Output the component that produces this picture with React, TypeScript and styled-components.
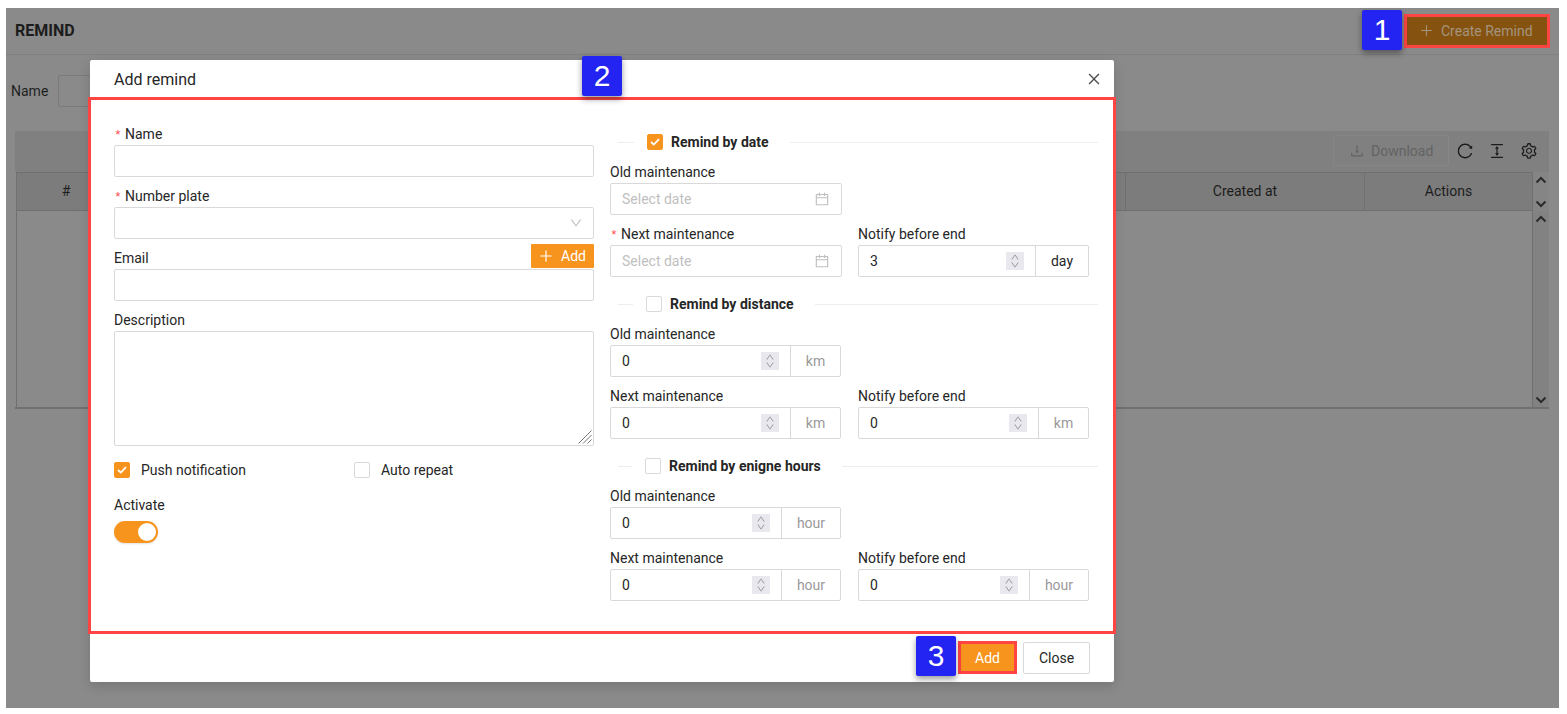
import React from 'react';
import styled, { createGlobalStyle } from 'styled-components';
import {
  AiOutlineCalendar,
  AiOutlineClose,
  AiOutlineColumnHeight,
  AiOutlineDown,
  AiOutlineDownload,
  AiOutlinePlus,
  AiOutlineReload,
  AiOutlineSetting,
  AiOutlineUp,
} from 'react-icons/ai';

const ORANGE = '#f7941d';
const RED = '#ff4444';

const GlobalStyle = createGlobalStyle`
  html, body {
    margin: 0;
    padding: 0;
    background: #fff;
  }
  * {
    box-sizing: border-box;
  }
  body {
    font-family: Roboto, "Liberation Sans", sans-serif;
    font-size: 14px;
    color: #262626;
  }
`;

const Page = styled.div`
  width: 1567px;
  height: 714px;
  padding: 8px 8px 6px 6px;
  overflow: hidden;
`;

const Screen = styled.div`
  position: relative;
  height: 100%;
  background: #8a8a8a;
`;

const Header = styled.header`
  display: flex;
  align-items: center;
  justify-content: space-between;
  height: 47px;
  padding: 0 9px 1px;
  border-bottom: 1px solid #808080;
`;

const PageTitle = styled.h1`
  margin: 0;
  font-size: 16px;
  font-weight: 700;
  color: #1c1c1c;
`;

const CreateButton = styled.div`
  display: flex;
  align-items: center;
  gap: 7px;
  width: 146px;
  height: 34px;
  padding-left: 12px;
  border: 3px solid ${RED};
  background: #85520f;
  color: #a3947f;
`;

const FilterRow = styled.div`
  display: flex;
  align-items: center;
  gap: 10px;
  margin-top: 20px;
  padding-left: 5px;
  color: #1f1f1f;
`;

const FilterInput = styled.div`
  width: 220px;
  height: 32px;
  border: 1px solid #7a7a7a;
  border-radius: 2px;
`;

const TableSection = styled.section`
  margin: 24px 10px 0 9px;
`;

const TableToolbar = styled.div`
  display: flex;
  align-items: center;
  justify-content: flex-end;
  height: 41px;
  padding: 0 4px 2px 0;
  background: #808080;
`;

const DownloadButton = styled.div`
  display: flex;
  align-items: center;
  gap: 6px;
  width: 116px;
  height: 31px;
  padding-left: 15px;
  border: 1px solid #868686;
  border-radius: 2px;
  color: #636363;
`;

const ToolIcon = styled.div`
  display: flex;
  align-items: center;
  justify-content: center;
  width: 32px;
  color: #1c1c1c;
`;

const TableFrame = styled.div`
  display: flex;
  height: 237px;
  padding-left: 1px;
  border-bottom: 2px solid #707070;
`;

const TableMain = styled.div`
  flex: 1;
  border-left: 1px solid #707070;
  border-right: 1px solid #707070;
`;

const HeaderRow = styled.div`
  display: grid;
  grid-template-columns: 99px 1fr 239px 167px;
  height: 39px;
  background: #7c7c7c;
  border-top: 1px solid #707070;
  border-bottom: 1px solid #6f6f6f;
`;

const HeaderCell = styled.div`
  display: flex;
  align-items: center;
  justify-content: center;
  padding-bottom: 1px;
  border-right: 1px solid #6f6f6f;
  color: #1c1c1c;

  &:last-child {
    border-right: none;
  }
`;

const ScrollColumn = styled.div`
  display: flex;
  flex-direction: column;
  width: 16px;
`;

const ScrollTrack = styled.div<{ $height: number; $shade: string }>`
  display: flex;
  flex-direction: column;
  align-items: center;
  justify-content: space-between;
  height: ${props => props.$height}px;
  padding: 4px 0 3px;
  background: ${props => props.$shade};
  color: #2b2b2b;
`;

const Modal = styled.div`
  position: absolute;
  left: 84px;
  top: 52px;
  width: 1024px;
  height: 622px;
  background: #fff;
  border-radius: 2px;
  box-shadow: 0 4px 12px rgba(0, 0, 0, 0.15);
`;

const ModalHeader = styled.div`
  display: flex;
  align-items: center;
  justify-content: space-between;
  height: 37px;
  padding: 1px 12px 0 24px;
  font-size: 16px;
  color: #262626;
`;

const CloseIcon = styled.span`
  display: flex;
  color: #4a4a4a;
`;

const ModalBody = styled.div`
  display: flex;
  gap: 16px;
  height: 537px;
  margin: 0 -2px 0 -2px;
  padding: 23px 0 0 23px;
  border: 3px solid ${RED};
`;

const LeftColumn = styled.div`
  width: 480px;
`;

const RightColumn = styled.div`
  width: 488px;
  padding-top: 7px;
`;

const FormItem = styled.div`
  margin-bottom: 8px;
`;

const LabelRow = styled.div`
  display: flex;
  align-items: flex-start;
  justify-content: space-between;
  height: 22px;
`;

const Label = styled.label`
  display: block;
  height: 22px;
  line-height: 22px;
  color: #262626;
`;

const Star = styled.span`
  display: inline-block;
  width: 7px;
  margin-right: 4px;
  color: #ff4d4f;
  font-family: "Liberation Mono", monospace;
  font-size: 13px;
`;

const TextInput = styled.input`
  display: block;
  width: 100%;
  height: 32px;
  padding: 0 11px;
  border: 1px solid #d9d9d9;
  border-radius: 2px;
  outline: none;
  font: inherit;
`;

const SelectBox = styled.div`
  display: flex;
  align-items: center;
  justify-content: flex-end;
  height: 32px;
  padding-right: 10px;
  border: 1px solid #d9d9d9;
  border-radius: 2px;
  color: #bfbfbf;
`;

const SmallAdd = styled.div`
  display: flex;
  align-items: center;
  gap: 7px;
  height: 24px;
  margin-top: -3px;
  padding: 0 8px 0 7px;
  background: ${ORANGE};
  color: #fff;
  border-radius: 1px;
`;

const TextAreaWrap = styled.div`
  position: relative;
  height: 115px;
`;

const TextArea = styled.textarea`
  display: block;
  width: 100%;
  height: 100%;
  margin: 0;
  border: 1px solid #d9d9d9;
  border-radius: 2px;
  outline: none;
  resize: none;
  font: inherit;
`;

const ResizeGrip = styled.svg`
  position: absolute;
  right: 2px;
  bottom: 2px;
`;

const CheckRow = styled.div`
  display: grid;
  grid-template-columns: 240px 1fr;
  margin-top: 13px;
`;

const CheckItem = styled.div`
  display: flex;
  align-items: center;
  gap: 11px;
  height: 22px;
`;

const Box = styled.span<{ $checked?: boolean }>`
  display: flex;
  align-items: center;
  justify-content: center;
  flex-shrink: 0;
  width: 16px;
  height: 16px;
  border: 1px solid ${props => (props.$checked ? ORANGE : '#d9d9d9')};
  border-radius: 2px;
  background: ${props => (props.$checked ? ORANGE : '#fff')};
`;

const ActivateLabel = styled(Label)`
  margin-top: 13px;
`;

const Switch = styled.div`
  display: flex;
  justify-content: flex-end;
  width: 44px;
  height: 22px;
  margin-top: 5px;
  padding: 2px;
  border-radius: 11px;
  background: ${ORANGE};
  box-shadow: 0 1px 2px rgba(0, 0, 0, 0.12);
`;

const Knob = styled.span`
  width: 18px;
  height: 18px;
  border-radius: 50%;
  background: #fff;
`;

const Section = styled.div`
  margin-bottom: 15px;
`;

const DividerRow = styled.div`
  display: flex;
  align-items: center;
  height: 24px;
  margin: 0 0 7px 8px;
`;

const DividerLine = styled.span<{ $width?: number }>`
  flex: ${props => (props.$width ? `0 0 ${props.$width}px` : '1')};
  height: 1px;
  background: #eeeeee;
`;

const DividerTitle = styled.div`
  display: flex;
  align-items: center;
  gap: 8px;
  padding: 0 21px 0 13px;
  font-weight: 700;
  color: #262626;
`;

const FieldGrid = styled.div`
  display: grid;
  grid-template-columns: 231px 231px;
  column-gap: 17px;
  row-gap: 8px;
`;

const Field = styled.div``;

const DateBox = styled.div`
  display: flex;
  align-items: center;
  justify-content: space-between;
  height: 32px;
  margin-right: -1px;
  padding: 0 11px;
  border: 1px solid #d9d9d9;
  border-radius: 2px;
  color: #bfbfbf;
`;

const NumberGroup = styled.div`
  display: flex;
  height: 32px;
  border: 1px solid #d9d9d9;
  border-radius: 2px;
`;

const NumberValue = styled.div`
  display: flex;
  flex: 1;
  align-items: center;
  justify-content: space-between;
  padding: 0 11px;
  color: #262626;
`;

const Stepper = styled.span`
  display: flex;
  flex-direction: column;
  align-items: center;
  justify-content: center;
  width: 18px;
  height: 18px;
  line-height: 0;
  background: #e8e8ee;
  color: #8c8c8c;

  svg + svg {
    margin-top: -2px;
  }
`;

const Addon = styled.div<{ $width: number; $muted?: boolean }>`
  display: flex;
  align-items: center;
  justify-content: center;
  width: ${props => props.$width}px;
  border-left: 1px solid #d9d9d9;
  color: ${props => (props.$muted ? '#999' : '#262626')};
`;

const ModalFooter = styled.div`
  display: flex;
  align-items: center;
  justify-content: flex-end;
  gap: 6px;
  height: 48px;
  padding-right: 24px;
`;

const AddButton = styled.div`
  display: flex;
  align-items: center;
  justify-content: center;
  width: 59px;
  height: 33px;
  margin-top: -1px;
  border: 3px solid ${RED};
  background: ${ORANGE};
  color: #fff;
`;

const CloseButton = styled.div`
  display: flex;
  align-items: center;
  justify-content: center;
  width: 67px;
  height: 32px;
  border: 1px solid #d9d9d9;
  border-radius: 2px;
  color: #262626;
`;

const Badge = styled.div<{ $left: number; $top: number }>`
  position: absolute;
  left: ${props => props.$left}px;
  top: ${props => props.$top}px;
  display: flex;
  align-items: center;
  justify-content: center;
  width: 40px;
  height: 40px;
  border-radius: 2px;
  background: #2323f2;
  color: #fff;
  font-family: "Liberation Sans", Arial, sans-serif;
  font-size: 30px;
  box-shadow: 0 3px 6px rgba(0, 0, 0, 0.4);
`;

const Required = () => <Star>*</Star>;

const Tick = () => (
  <svg width="10" height="8" viewBox="0 0 10 8" fill="none">
    <path d="M1 4l2.8 2.6L9 1.2" stroke="#fff" strokeWidth="1.8" />
  </svg>
);

const Check = ({ checked }: { checked?: boolean }) => (
  <Box $checked={checked}>{checked && <Tick />}</Box>
);

const ScrollArrow = ({ down }: { down?: boolean }) => (
  <svg width="12" height="8" viewBox="0 0 12 8" fill="none">
    <path d={down ? 'M1.5 1.5L6 6l4.5-4.5' : 'M1.5 6.5L6 2l4.5 4.5'} stroke="currentColor" strokeWidth="2" />
  </svg>
);

const NumberField = ({ value, unit, width, muted = true }: { value: string; unit: string; width: number; muted?: boolean }) => (
  <NumberGroup>
    <NumberValue>
      {value}
      <Stepper>
        <AiOutlineUp size={10} />
        <AiOutlineDown size={10} />
      </Stepper>
    </NumberValue>
    <Addon $width={width} $muted={muted}>{unit}</Addon>
  </NumberGroup>
);

const DateField = () => (
  <DateBox>
    Select date
    <AiOutlineCalendar size={16} />
  </DateBox>
);

const SectionTitle = ({ title, checked, lead }: { title: string; checked?: boolean; lead: number }) => (
  <DividerRow>
    <DividerLine $width={lead} />
    <DividerTitle>
      <Check checked={checked} />
      {title}
    </DividerTitle>
    <DividerLine />
  </DividerRow>
);

const NumberSection = ({ title, unit, width, lead }: { title: string; unit: string; width: number; lead: number }) => (
  <Section>
    <SectionTitle title={title} lead={lead} />
    <FieldGrid>
      <Field>
        <Label>Old maintenance</Label>
        <NumberField value="0" unit={unit} width={width} />
      </Field>
      <Field />
      <Field>
        <Label>Next maintenance</Label>
        <NumberField value="0" unit={unit} width={width} />
      </Field>
      <Field>
        <Label>Notify before end</Label>
        <NumberField value="0" unit={unit} width={width} />
      </Field>
    </FieldGrid>
  </Section>
);

const App: React.FC = () => {
  return (
    <Page>
      <GlobalStyle />
      <Screen>
        <Header>
          <PageTitle>REMIND</PageTitle>
          <CreateButton>
            <AiOutlinePlus size={15} />
            Create Remind
          </CreateButton>
        </Header>

        <FilterRow>
          Name
          <FilterInput />
        </FilterRow>

        <TableSection>
          <TableToolbar>
            <DownloadButton>
              <AiOutlineDownload size={16} />
              Download
            </DownloadButton>
            <ToolIcon><AiOutlineReload size={18} /></ToolIcon>
            <ToolIcon><AiOutlineColumnHeight size={18} /></ToolIcon>
            <ToolIcon><AiOutlineSetting size={18} /></ToolIcon>
          </TableToolbar>
          <TableFrame>
            <TableMain>
              <HeaderRow>
                <HeaderCell>#</HeaderCell>
                <HeaderCell />
                <HeaderCell>Created at</HeaderCell>
                <HeaderCell>Actions</HeaderCell>
              </HeaderRow>
            </TableMain>
            <ScrollColumn>
              <ScrollTrack $height={39} $shade="#858585">
                <ScrollArrow />
                <ScrollArrow down />
              </ScrollTrack>
              <ScrollTrack $height={196} $shade="#828282">
                <ScrollArrow />
                <ScrollArrow down />
              </ScrollTrack>
            </ScrollColumn>
          </TableFrame>
        </TableSection>

        <Modal>
          <ModalHeader>
            Add remind
            <CloseIcon><AiOutlineClose size={16} /></CloseIcon>
          </ModalHeader>

          <ModalBody>
            <LeftColumn>
              <FormItem>
                <Label><Required />Name</Label>
                <TextInput />
              </FormItem>
              <FormItem>
                <Label><Required />Number plate</Label>
                <SelectBox><AiOutlineDown size={14} /></SelectBox>
              </FormItem>
              <FormItem>
                <LabelRow>
                  <Label>Email</Label>
                  <SmallAdd>
                    <AiOutlinePlus size={16} />
                    Add
                  </SmallAdd>
                </LabelRow>
                <TextInput />
              </FormItem>
              <Label>Description</Label>
              <TextAreaWrap>
                <TextArea />
                <ResizeGrip width="14" height="14" viewBox="0 0 14 14" fill="none" stroke="#777" strokeWidth="1">
                  <path d="M0.5 13.5L13.5 0.5M5 13.5L13.5 5M9.5 13.5L13.5 9.5" />
                </ResizeGrip>
              </TextAreaWrap>
              <CheckRow>
                <CheckItem>
                  <Check checked />
                  Push notification
                </CheckItem>
                <CheckItem>
                  <Check />
                  Auto repeat
                </CheckItem>
              </CheckRow>
              <ActivateLabel>Activate</ActivateLabel>
              <Switch><Knob /></Switch>
            </LeftColumn>

            <RightColumn>
              <Section>
                <SectionTitle title="Remind by date" checked lead={16} />
                <FieldGrid>
                  <Field>
                    <Label>Old maintenance</Label>
                    <DateField />
                  </Field>
                  <Field />
                  <Field>
                    <Label><Required />Next maintenance</Label>
                    <DateField />
                  </Field>
                  <Field>
                    <Label>Notify before end</Label>
                    <NumberField value="3" unit="day" width={53} muted={false} />
                  </Field>
                </FieldGrid>
              </Section>
              <NumberSection title="Remind by distance" unit="km" width={50} lead={15} />
              <NumberSection title="Remind by enigne hours" unit="hour" width={59} lead={14} />
            </RightColumn>
          </ModalBody>

          <ModalFooter>
            <AddButton>Add</AddButton>
            <CloseButton>Close</CloseButton>
          </ModalFooter>
        </Modal>

        <Badge $left={1356} $top={2}>1</Badge>
        <Badge $left={576} $top={48}>2</Badge>
        <Badge $left={910} $top={628}>3</Badge>
      </Screen>
    </Page>
  );
};

export default App;
